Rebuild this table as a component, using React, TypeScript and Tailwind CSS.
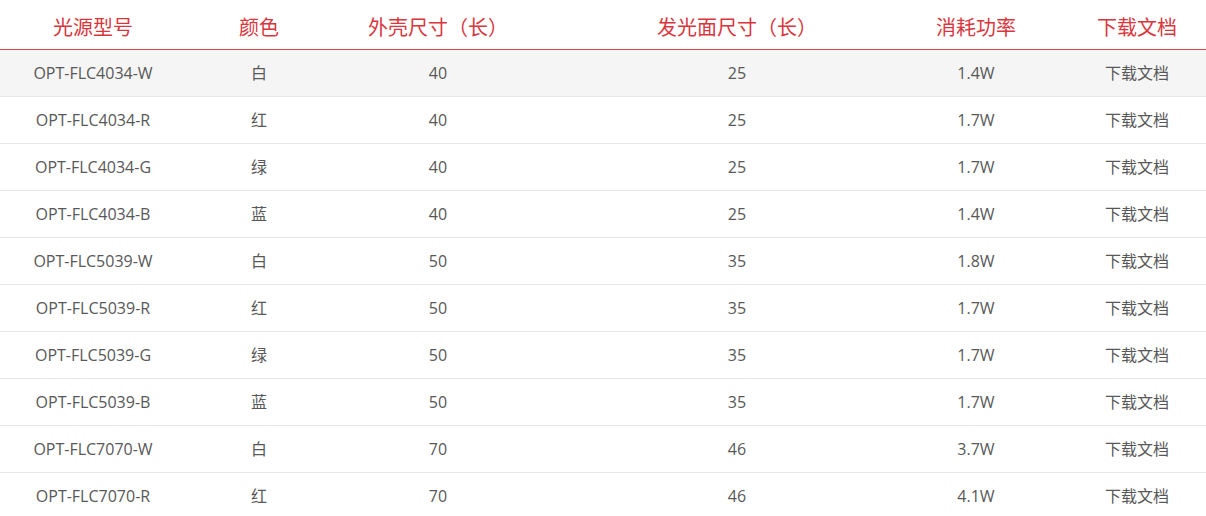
import React from 'react';

const headers = ['光源型号', '颜色', '外壳尺寸（长）', '发光面尺寸（长）', '消耗功率', '下载文档'];

const rows: [string, string, string, string, string][] = [
  ['OPT-FLC4034-W', '白', '40', '25', '1.4W'],
  ['OPT-FLC4034-R', '红', '40', '25', '1.7W'],
  ['OPT-FLC4034-G', '绿', '40', '25', '1.7W'],
  ['OPT-FLC4034-B', '蓝', '40', '25', '1.4W'],
  ['OPT-FLC5039-W', '白', '50', '35', '1.8W'],
  ['OPT-FLC5039-R', '红', '50', '35', '1.7W'],
  ['OPT-FLC5039-G', '绿', '50', '35', '1.7W'],
  ['OPT-FLC5039-B', '蓝', '50', '35', '1.7W'],
  ['OPT-FLC7070-W', '白', '70', '46', '3.7W'],
  ['OPT-FLC7070-R', '红', '70', '46', '4.1W'],
];

// column widths picked so the cell centres line up with the screenshot
const cols = 'grid grid-cols-[186px_146px_212px_386px_92px_230px]';

const App: React.FC = () => {
  return (
    <div
      className="w-[1206px] h-[516px] overflow-hidden bg-white"
      style={{ fontFamily: '"Open Sans", "Noto Sans CJK SC", sans-serif' }}
    >
      <div className="w-[1252px]">
        {/* Header */}
        <div className={`${cols} h-[50px] border-b border-[#d9474c] text-[20px] text-[#d9363e]`}>
          {headers.map((h) => (
            <div key={h} className="flex items-center justify-center pt-[6px] whitespace-nowrap">
              {h}
            </div>
          ))}
        </div>

        {/* Rows */}
        {rows.map((r, i) => (
          <div
            key={r[0]}
            className={`${cols} h-[47px] border-b border-[#e6e6e6] text-[16px] text-[#585858] ${
              i === 0 ? 'bg-[#f5f5f5]' : 'bg-white'
            }`}
          >
            {r.map((c, j) => (
              <div key={j} className="flex items-center justify-center whitespace-nowrap">
                {c}
              </div>
            ))}
            <div className="flex items-center justify-center whitespace-nowrap cursor-pointer">下载文档</div>
          </div>
        ))}
      </div>
    </div>
  );
};

export default App;
